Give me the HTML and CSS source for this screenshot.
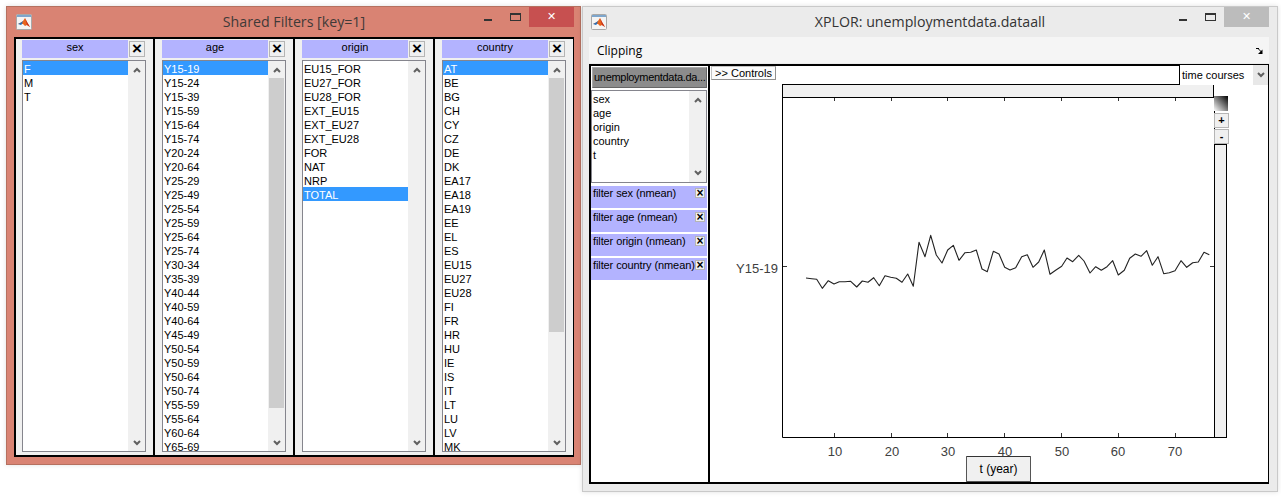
FILE: index.html
```html
<!DOCTYPE html>
<html>
<head lang="en">
    <meta charset="UTF-8">
    <title>XPLOR</title>
    <link rel="stylesheet" href="styles.css">
</head>
<body>
<div class="desktop">
    <!-- Shared Filters -->
    <div class="window win-filters">
        <div class="titlebar">
            <svg class="app-icon" viewBox="0 0 16 16"><rect x="0.5" y="0.5" width="15" height="15" rx="1" fill="#f4f4f4" stroke="#a8a8a8"/><rect x="1" y="1" width="14" height="2" fill="#7ea6cc"/><path d="M2 10l3-1.500 2-1.500 2-3 2 4 3 5-3-2-2 1-2-2z" fill="#e8641c"/><path d="M2 10l3-1.500 2-1.500-1 3-1 1z" fill="#2a6fb5"/><path d="M9 4l2 4 3 5-3-2z" fill="#c8301c"/></svg>
            <span class="title">Shared Filters [key=1]</span>
            <div class="controls">
                <i class="btn-min"></i>
                <i class="btn-max"></i>
                <i class="btn-close red">&#10005;</i>
            </div>
        </div>
        <div class="filter-frame">
            <div class="filter-cell">
                <div class="filter-head"><span class="filter-name">sex</span><span class="x-btn">&times;</span></div>
                <div class="listbox">
                    <ul class="rows">
                        <li class="sel">F</li><li>M</li><li>T</li>
                    </ul>
                    <div class="scroll"><svg class="chev" viewBox="0 0 8 6"><path d="M1 5l3-3 3 3"/></svg><div class="track"></div><svg class="chev" viewBox="0 0 8 6"><path d="M1 1l3 3 3-3"/></svg></div>
                </div>
            </div>
            <div class="filter-cell">
                <div class="filter-head"><span class="filter-name">age</span><span class="x-btn">&times;</span></div>
                <div class="listbox">
                    <ul class="rows">
                        <li class="sel">Y15-19</li><li>Y15-24</li><li>Y15-39</li><li>Y15-59</li><li>Y15-64</li><li>Y15-74</li><li>Y20-24</li><li>Y20-64</li><li>Y25-29</li><li>Y25-49</li><li>Y25-54</li><li>Y25-59</li><li>Y25-64</li><li>Y25-74</li><li>Y30-34</li><li>Y35-39</li><li>Y40-44</li><li>Y40-59</li><li>Y40-64</li><li>Y45-49</li><li>Y50-54</li><li>Y50-59</li><li>Y50-64</li><li>Y50-74</li><li>Y55-59</li><li>Y55-64</li><li>Y60-64</li><li>Y65-69</li>
                    </ul>
                    <div class="scroll"><svg class="chev" viewBox="0 0 8 6"><path d="M1 5l3-3 3 3"/></svg><div class="track"><div class="thumb thumb-age"></div></div><svg class="chev" viewBox="0 0 8 6"><path d="M1 1l3 3 3-3"/></svg></div>
                </div>
            </div>
            <div class="filter-cell">
                <div class="filter-head"><span class="filter-name">origin</span><span class="x-btn">&times;</span></div>
                <div class="listbox">
                    <ul class="rows">
                        <li>EU15_FOR</li><li>EU27_FOR</li><li>EU28_FOR</li><li>EXT_EU15</li><li>EXT_EU27</li><li>EXT_EU28</li><li>FOR</li><li>NAT</li><li>NRP</li><li class="sel">TOTAL</li>
                    </ul>
                    <div class="scroll"><svg class="chev" viewBox="0 0 8 6"><path d="M1 5l3-3 3 3"/></svg><div class="track"></div><svg class="chev" viewBox="0 0 8 6"><path d="M1 1l3 3 3-3"/></svg></div>
                </div>
            </div>
            <div class="filter-cell">
                <div class="filter-head"><span class="filter-name">country</span><span class="x-btn">&times;</span></div>
                <div class="listbox">
                    <ul class="rows">
                        <li class="sel">AT</li><li>BE</li><li>BG</li><li>CH</li><li>CY</li><li>CZ</li><li>DE</li><li>DK</li><li>EA17</li><li>EA18</li><li>EA19</li><li>EE</li><li>EL</li><li>ES</li><li>EU15</li><li>EU27</li><li>EU28</li><li>FI</li><li>FR</li><li>HR</li><li>HU</li><li>IE</li><li>IS</li><li>IT</li><li>LT</li><li>LU</li><li>LV</li><li>MK</li>
                    </ul>
                    <div class="scroll"><svg class="chev" viewBox="0 0 8 6"><path d="M1 5l3-3 3 3"/></svg><div class="track"><div class="thumb thumb-country"></div></div><svg class="chev" viewBox="0 0 8 6"><path d="M1 1l3 3 3-3"/></svg></div>
                </div>
            </div>
        </div>
    </div>

    <!-- XPLOR -->
    <div class="window win-xplor">
        <div class="titlebar">
            <svg class="app-icon" viewBox="0 0 16 16"><rect x="0.5" y="0.5" width="15" height="15" rx="1" fill="#f4f4f4" stroke="#a8a8a8"/><rect x="1" y="1" width="14" height="2" fill="#7ea6cc"/><path d="M2 10l3-1.500 2-1.500 2-3 2 4 3 5-3-2-2 1-2-2z" fill="#e8641c"/><path d="M2 10l3-1.500 2-1.500-1 3-1 1z" fill="#2a6fb5"/><path d="M9 4l2 4 3 5-3-2z" fill="#c8301c"/></svg>
            <span class="title">XPLOR: unemploymentdata.dataall</span>
            <div class="controls">
                <i class="btn-min"></i>
                <i class="btn-max"></i>
                <i class="btn-close grey">&#10005;</i>
            </div>
        </div>
        <div class="menubar">
            <span>Clipping</span>
            <svg class="menu-arrow" viewBox="0 0 7 6"><path d="M0 .5h3M2 .5l3.500 3.500" stroke="#000" fill="none"/><path d="M6.500 1.500v4.500h-4.500z" fill="#000"/></svg>
        </div>
        <div class="main-frame">
            <div class="side">
                <div class="data-title">unemploymentdata.da...</div>
                <div class="listbox dims">
                    <ul class="rows">
                        <li>sex</li><li>age</li><li>origin</li><li>country</li><li>t</li>
                    </ul>
                    <div class="scroll"><svg class="chev" viewBox="0 0 8 6"><path d="M1 5l3-3 3 3"/></svg><div class="track"></div><svg class="chev" viewBox="0 0 8 6"><path d="M1 1l3 3 3-3"/></svg></div>
                </div>
                <div class="active-filter"><span>filter sex (nmean)</span><span class="x-small">&times;</span></div>
                <div class="active-filter"><span>filter age (nmean)</span><span class="x-small">&times;</span></div>
                <div class="active-filter"><span>filter origin (nmean)</span><span class="x-small">&times;</span></div>
                <div class="active-filter"><span>filter country (nmean)</span><span class="x-small">&times;</span></div>
            </div>
            <div class="plot-area">
                <div class="plot-top">
                    <button class="controls-btn">&gt;&gt; Controls</button>
                    <div class="view-select"><span>time courses</span><span class="select-arrow"><svg class="chev" viewBox="0 0 8 6"><path d="M1 1l3 3 3-3"/></svg></span></div>
                </div>
                <!-- axes are drawn in page coordinates -->
                <svg class="plot" viewBox="710 66 559 416">
                    <defs>
                        <linearGradient id="cmap" x1="1" y1="0" x2="0" y2="1">
                            <stop offset="0" stop-color="#000"/>
                            <stop offset="1" stop-color="#fff"/>
                        </linearGradient>
                    </defs>
                    <rect class="strip" x="782.500" y="84.500" width="431" height="13"/>
                    <path class="axis" d="M782.500 97v340.500H1226.500M1214.500 97V144"/>
                    <path class="tick" d="M834.500 437v-4M891.500 437v-4M947.500 437v-4M1004.500 437v-4M1061.500 437v-4M1118.500 437v-4M1175.500 437v-4M834.500 98v3M891.500 98v3M947.500 98v3M1004.500 98v3M1061.500 98v3M1118.500 98v3M1175.500 98v3M783 266.500h4M1214 266.500h-4"/>
                    <polyline class="curve" points="806,278 811.700,278.700 816.700,279.300 822.300,288.300 828.300,280.700 834,284 839.300,281.700 845,281.700 850.700,281.300 856.700,287 862.300,281 868,282.300 873.700,277.700 879.300,285.700 885,275.700 890.700,277.300 896.300,278.300 902,282.300 907.700,274 913.300,286.300 919,242.300 925,256.700 930.700,235.300 936.300,255 942,263 947.700,250 953.300,245.300 959,260.300 965,252.700 970.700,252.300 976.300,250 982,269 987.300,271.700 993.300,251.300 999,254 1004.700,267.300 1010,270 1015.700,267.700 1021.700,256.700 1027.300,254.700 1033,267.300 1038.700,262 1044.300,250 1050,274.300 1056,270 1061.700,266.300 1067,258 1072.700,261.700 1078.700,255.300 1084,261 1090,273 1095.700,266.700 1101.300,270.300 1107,266.700 1112.700,260.700 1118.300,275 1124.300,270.300 1129.700,258.300 1135.300,254 1141,256.300 1146.700,250.700 1152.300,265.300 1158,256.700 1163.700,273.700 1169.300,272.700 1175,270.700 1181,260.700 1186.700,267.300 1192.700,262.700 1198.300,262 1204,252.300 1209.300,254.700"/>
                    <text class="y-label" x="778" y="273">Y15-19</text>
                    <g class="x-labels">
                        <text x="835" y="456">10</text>
                        <text x="892" y="456">20</text>
                        <text x="948" y="456">30</text>
                        <text x="1005" y="456">40</text>
                        <text x="1062" y="456">50</text>
                        <text x="1118" y="456">60</text>
                        <text x="1175" y="456">70</text>
                    </g>
                    <rect x="1214" y="96" width="14" height="15" fill="url(#cmap)"/>
                    <rect class="slider" x="1214.500" y="144.500" width="12" height="293"/>
                </svg>
                <button class="zoom-btn zoom-plus">+</button>
                <button class="zoom-btn zoom-minus">-</button>
                <button class="xlabel-btn">t (year)</button>
            </div>
        </div>
    </div>
</div>
</body>
</html>
```

FILE: styles.css
```css
* {
    margin: 0;
    padding: 0;
    box-sizing: border-box;
}
body {
    background: #fff;
    font: 11px/14px "Liberation Sans", Arial, sans-serif;
    color: #000;
}
ul {
    list-style: none;
}
.desktop {
    position: relative;
    width: 1281px;
    height: 499px;
    overflow: hidden;
}
/* windows */
.window {
    position: absolute;
    top: 6px;
    display: flex;
    flex-direction: column;
    border: 1px solid #c9c9c9;
    box-shadow: 0 0 5px rgba(0, 0, 0, 0.12);
}
.win-filters {
    left: 6px;
    width: 575px;
    height: 459px;
    background: #d98373;
    border-color: #b5705f;
    padding: 0 6px 7px 7px;
}
.win-xplor {
    left: 582px;
    width: 696px;
    height: 486px;
    background: #ebebeb;
    padding: 0 8px 7px 6px;
}
.titlebar {
    height: 30px;
    flex: none;
    display: flex;
    align-items: center;
    position: relative;
}
.app-icon {
    width: 16px;
    height: 16px;
    margin: -1px 0 0 2px;
    flex: none;
}
.title {
    position: absolute;
    left: 0;
    right: 0;
    top: 5px;
    text-align: center;
    font: 14.200px/20px "Open Sans", "Noto Sans", sans-serif;
    color: #3f3a38;
    pointer-events: none;
}
.win-xplor .title {
    left: 2px;
    color: #333;
}
.controls {
    position: absolute;
    top: 0;
    right: 0;
    display: flex;
    height: 20px;
}
.controls i {
    display: block;
    font-style: normal;
}
.btn-min {
    width: 8px;
    height: 2px;
    background: #333;
    margin: 12px 18px 0 0;
}
.btn-max {
    width: 11px;
    height: 8px;
    border: 1px solid #333;
    border-top-width: 2px;
    margin: 6px 8px 0 0;
}
.btn-close {
    width: 45px;
    height: 20px;
    text-align: center;
    color: #fff;
    font: 700 11px/20px "DejaVu Sans", sans-serif;
}
.btn-close.red {
    background: #c75050;
}
.btn-close.grey {
    background: #bcbcbc;
}
/* Shared Filters panel */
.filter-frame {
    flex: 1;
    display: grid;
    grid-template-columns: 137px 138px 138px 138px;
    gap: 2px;
    background: #000;
    border: 2px solid #000;
    min-height: 0;
}
.filter-cell {
    background: #f0f0f0;
    padding: 1px 7px 3px 6px;
    display: flex;
    flex-direction: column;
    min-height: 0;
}
.filter-cell + .filter-cell {
    padding-left: 7px;
}
.filter-head {
    display: flex;
    height: 18px;
    margin-bottom: 2px;
    flex: none;
}
.filter-name {
    flex: 1;
    background: #b3b3ff;
    text-align: center;
    line-height: 15px;
}
.x-btn {
    width: 16px;
    height: 16px;
    margin: 1px 1px 0 1px;
    border: 1px solid #b5b5b5;
    background: #f0f0f0;
    text-align: center;
    font: 700 17px/14px "Liberation Sans", Arial, sans-serif;
}
.listbox {
    flex: 1;
    display: flex;
    min-height: 0;
    background: #fff;
    border: 1px solid #85858d;
    overflow: hidden;
}
.rows {
    flex: 1;
    min-width: 0;
    overflow: hidden;
}
.rows li {
    height: 14px;
    line-height: 16px;
    padding-left: 1px;
    white-space: nowrap;
}
.rows li.sel {
    background: #3399ff;
    color: #fff;
}
.scroll {
    width: 17px;
    flex: none;
    background: #f0f0f0;
    display: flex;
    flex-direction: column;
}
.chev {
    display: block;
    width: 8px;
    height: 6px;
    fill: none;
    stroke: #606060;
    stroke-width: 2;
}
.scroll .chev {
    margin: 6px auto 5px;
    flex: none;
}
.track {
    flex: 1;
    min-height: 0;
}
.thumb {
    background: #cdcdcd;
    width: 15px;
    margin-left: 1px;
}
.thumb-age {
    height: 330px;
}
.thumb-country {
    height: 254px;
}
/* XPLOR window */
.menubar {
    height: 26px;
    flex: none;
    background: #f5f5f5;
    margin-bottom: 1px;
    padding: 1px 6px 0 8px;
    display: flex;
    align-items: center;
    justify-content: space-between;
    font: 12px/16px "Open Sans", "Noto Sans", sans-serif;
}
.menu-arrow {
    width: 7px;
    height: 6px;
}
.main-frame {
    flex: 1;
    min-height: 0;
    display: flex;
    border: 2px solid #000;
    border-right-width: 1px;
    background: #fff;
}
.side {
    width: 117px;
    flex: none;
    padding: 1px 1px 0 0;
    display: flex;
    flex-direction: column;
}
.data-title {
    height: 21px;
    margin: 0 0 2px 1px;
    padding-left: 1px;
    background: #8c8c8c;
    border: 1px solid #a8a8a8;
    border-bottom-color: #666;
    border-right-color: #666;
    line-height: 19px;
    letter-spacing: -0.3px;
    white-space: nowrap;
    overflow: hidden;
}
.dims {
    flex: none;
    height: 93px;
    margin-bottom: 3px;
}
.dims .rows {
    padding-top: 0;
}
.dims .scroll .chev {
    margin: 6px auto 0;
}
.dims .scroll .chev:last-child {
    margin-bottom: 6px;
}
.active-filter {
    height: 22px;
    margin-bottom: 2px;
    padding: 0 2px;
    background: #b3b3ff;
    display: flex;
    justify-content: space-between;
    letter-spacing: -0.1px;
    white-space: nowrap;
    overflow: hidden;
}
.x-small {
    width: 10px;
    height: 10px;
    margin-top: 2px;
    background: #f0f0f0;
    border: 1px solid #b5b5b5;
    text-align: center;
    letter-spacing: 0;
    font: 700 12px/8px "Liberation Sans", Arial, sans-serif;
    flex: none;
}
.plot-area {
    position: relative;
    flex: 1;
    min-width: 0;
    border-left: 2px solid #000;
}
.plot-top {
    position: absolute;
    left: 0;
    right: 0;
    top: 0;
    display: flex;
    justify-content: space-between;
    align-items: flex-start;
    z-index: 1;
}
.controls-btn {
    width: 65px;
    height: 14px;
    margin: 0 0 0 1px;
    background: #fbfbfb;
    border: 1px solid #c4c4c4;
    border-right-color: #909090;
    border-bottom-color: #909090;
    font: 11px/11px "Liberation Sans", Arial, sans-serif;
}
.view-select {
    width: 89px;
    height: 20px;
    margin-top: -1px;
    background: #fff;
    border-left: 1px solid #000;
    display: flex;
    justify-content: space-between;
    line-height: 21px;
    padding-left: 2px;
}
.select-arrow {
    width: 15px;
    background: #e8e8e8;
    display: flex;
    align-items: center;
    justify-content: center;
}
.plot {
    display: block;
    width: 559px;
    height: 416px;
}
.strip {
    fill: #f0f0f0;
    stroke: #000;
}
.axis {
    fill: none;
    stroke: #000;
}
.tick {
    fill: none;
    stroke: #333;
}
.curve {
    fill: none;
    stroke: #222;
    stroke-width: 1.100;
    stroke-linejoin: round;
}
.slider {
    fill: #f0f0f0;
    stroke: #000;
}
.y-label {
    font: 13px "Liberation Sans", Arial, sans-serif;
    fill: #404040;
    text-anchor: end;
}
.x-labels text {
    font: 13px "Liberation Sans", Arial, sans-serif;
    fill: #404040;
    text-anchor: middle;
}
/* things laid over the axes */
.zoom-btn {
    position: absolute;
    left: 504px;
    width: 15px;
    height: 15px;
    background: #f0f0f0;
    border: 1px solid #b5b5b5;
    font: 700 11px/13px "Liberation Sans", Arial, sans-serif;
}
.zoom-plus {
    top: 47px;
}
.zoom-minus {
    top: 63px;
}
.xlabel-btn {
    position: absolute;
    left: 256px;
    top: 390px;
    width: 65px;
    height: 26px;
    background: #f0f0f0;
    border: 1px solid #555;
    border-top-color: #333;
    border-radius: 1px;
    font: 12px/14px "Liberation Sans", Arial, sans-serif;
}
```
